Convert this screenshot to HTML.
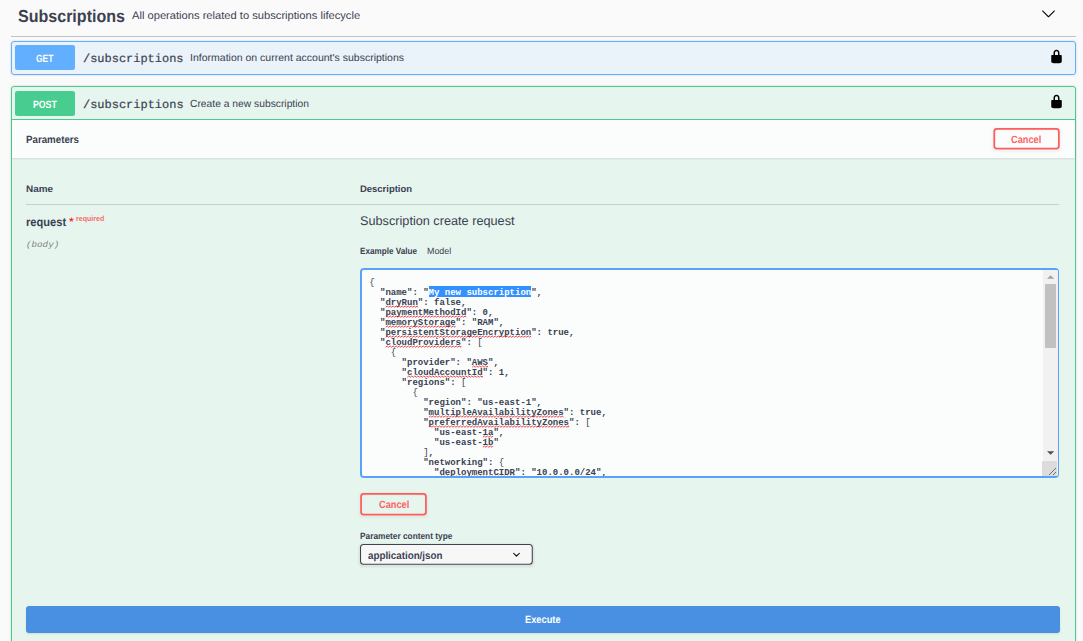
<!DOCTYPE html>
<html>
<head>
<meta charset="utf-8">
<title>Swagger UI</title>
<style>
*{box-sizing:border-box;}
html,body{margin:0;padding:0;}
body{width:1083px;height:641px;overflow:hidden;background:#fafafa;font-family:"Liberation Sans",sans-serif;color:#3b4151;position:relative;}
.abs{position:absolute;}
.t{position:absolute;white-space:nowrap;transform-origin:0 50%;line-height:1;}
.sans{font-family:"Liberation Sans",sans-serif;}
.mono{font-family:"Liberation Mono",monospace;}
.b{font-weight:700;}
.i{font-style:italic;}
#taghr{left:11px;top:36px;width:1065px;height:1px;background:rgba(59,65,81,.3);}
.opblock{position:absolute;left:11px;width:1065px;border:1px solid #000;border-radius:3px;box-shadow:0 0 2.25px rgba(0,0,0,.19);}
#get{top:41px;height:33.75px;border-color:#61affe;background:rgba(97,175,254,.1);}
#post{top:86.25px;height:700px;border-color:#49cc90;background:rgba(73,204,144,.1);}
.method{position:absolute;left:15.2px;width:59.8px;height:24.5px;border-radius:2.25px;}
#getm{top:45.2px;background:#61affe;}
#postm{top:91px;background:#49cc90;}
#postsumline{left:12px;top:119.25px;width:1063px;height:1px;background:#49cc90;}
#sechead{left:12px;top:120.25px;width:1063px;height:37.5px;background:rgba(255,255,255,.8);box-shadow:0 1px 2px rgba(0,0,0,.1);}
#thr{left:26.2px;top:204px;width:1033px;height:1px;background:rgba(59,65,81,.2);}
#taring{left:360px;top:268px;width:699px;height:210px;border:solid #58a3f8;border-width:2px 1px 2px 2px;border-radius:4px;}
#ta{border-radius:2px;background:rgba(255,255,255,.8);overflow:hidden;}
#ta pre i{font-style:normal;font-weight:400;}
#ta pre{margin:0;position:absolute;font-family:"Liberation Mono",monospace;font-weight:700;font-size:9px;line-height:10px;color:#3b4151;}
#selbg{background:#3390ff;}
.selt{color:#fff;}
#sb{right:0;top:-1px;width:15px;height:207px;background:#f1f1f1;}
#sbthumb{left:2px;top:15px;width:11px;height:64px;background:#c1c1c1;}
#sbcorner{left:-1px;bottom:0;width:15px;height:15px;background:#dcdcdc;}
#exec{left:26px;top:606px;width:1034px;height:26.5px;border-radius:3px;background:#4990e2;box-shadow:0 1px 2px rgba(0,0,0,.1);}
</style>
</head>
<body>
<div class="t sans b" id="h_title" style="left:17.70px;top:8.45px;font-size:17.40px;color:#3b4151;transform:rotate(0.03deg) scaleX(0.9223);">Subscriptions</div>
<div class="t sans" id="h_desc" style="left:131.93px;top:10.10px;font-size:10.80px;color:#3b4151;transform:rotate(0.03deg) scaleX(1.0328);">All operations related to subscriptions lifecycle</div>
<svg class="abs" id="chev" style="left:1040.75px;top:5.6px;" width="15" height="15" viewBox="0 0 20 20"><path fill="#000" d="M17.418 6.109c.272-.268.709-.268.979 0s.271.701 0 .969l-7.908 7.83c-.27.268-.707.268-.979 0l-7.908-7.83c-.27-.268-.27-.701 0-.969.271-.268.709-.268.979 0L10 13.25l7.418-7.141z"/></svg>
<div class="abs" id="taghr"></div>

<div class="opblock" id="get"></div>
<div class="method" id="getm"></div>
<div class="t sans b" id="get_m" style="left:36.26px;top:52.85px;font-size:10.50px;color:#fff;transform:rotate(0.03deg) scaleX(0.8022);">GET</div>
<div class="t mono" id="get_path" style="left:82.62px;top:53.83px;font-size:11.80px;color:#3b4151;transform:rotate(0.03deg) scaleX(1.0143);-webkit-text-stroke:0.2px #3b4151;">/subscriptions</div>
<div class="t sans" id="get_desc" style="left:190.16px;top:53.11px;font-size:10.30px;color:#3b4151;transform:rotate(0.03deg) scaleX(1.0206);">Information on current account&#39;s subscriptions</div>
<svg class="abs" id="lock1" style="left:1048.9px;top:49.15px;" width="15" height="15" viewBox="0 0 20 20"><path fill="#000" d="M15.8 8H14V5.6C14 2.703 12.665 1 10 1 7.334 1 6 2.703 6 5.6V8H4c-.553 0-1 .646-1 1.199V17c0 .549.428 1.139.951 1.307l1.197.387C5.672 18.861 6.55 19 7.1 19h5.8c.549 0 1.428-.139 1.951-.307l1.196-.387c.524-.167.953-.757.953-1.306V9.199C17 8.646 16.352 8 15.8 8zM12 8H8V5.199C8 3.754 8.797 3 10 3c1.203 0 2 .754 2 2.199V8z"/></svg>

<div class="opblock" id="post"></div>
<div class="method" id="postm"></div>
<div class="t sans b" id="post_m" style="left:33.21px;top:98.96px;font-size:10.50px;color:#fff;transform:rotate(0.03deg) scaleX(0.8288);">POST</div>
<div class="t mono" id="post_path" style="left:82.57px;top:99.71px;font-size:11.80px;color:#3b4151;transform:rotate(0.03deg) scaleX(1.0147);-webkit-text-stroke:0.2px #3b4151;">/subscriptions</div>
<div class="t sans" id="post_desc" style="left:190.18px;top:99.03px;font-size:10.30px;color:#3b4151;transform:rotate(0.03deg) scaleX(0.9993);">Create a new subscription</div>
<svg class="abs" id="lock2" style="left:1048.5px;top:94.25px;" width="15" height="15" viewBox="0 0 20 20"><path fill="#000" d="M15.8 8H14V5.6C14 2.703 12.665 1 10 1 7.334 1 6 2.703 6 5.6V8H4c-.553 0-1 .646-1 1.199V17c0 .549.428 1.139.951 1.307l1.197.387C5.672 18.861 6.55 19 7.1 19h5.8c.549 0 1.428-.139 1.951-.307l1.196-.387c.524-.167.953-.757.953-1.306V9.199C17 8.646 16.352 8 15.8 8zM12 8H8V5.199C8 3.754 8.797 3 10 3c1.203 0 2 .754 2 2.199V8z"/></svg>
<div class="abs" id="postsumline"></div>
<div class="abs" id="sechead"></div>
<div class="t sans b" id="params" style="left:26.27px;top:133.60px;font-size:10.50px;color:#3b4151;transform:rotate(0.03deg) scaleX(0.9269);">Parameters</div>
<svg class="abs" id="cancel1" style="left:989px;top:124px;overflow:visible" width="76" height="33"><rect x="4.40" y="5.00" width="66.35" height="21.50" rx="2.6" fill="none" stroke="rgba(0,0,0,.06)" stroke-width="2" style="filter:blur(1px)"/><rect x="5.27" y="4.88" width="64.60" height="19.75" rx="2.6" fill="none" stroke="#ff5c5c" stroke-width="1.75"/></svg>
<div class="t sans b" id="cancel1_t" style="left:1011.41px;top:134.21px;font-size:10.50px;color:#ff6060;transform:rotate(0.03deg) scaleX(0.8769);">Cancel</div>

<div class="t sans b" id="th_name" style="left:26.21px;top:184.48px;font-size:9.50px;color:#3b4151;transform:rotate(0.03deg) scaleX(1.0478);">Name</div>
<div class="t sans b" id="th_desc" style="left:359.71px;top:183.79px;font-size:9.50px;color:#3b4151;transform:rotate(0.03deg) scaleX(0.9944);">Description</div>
<div class="abs" id="thr"></div>
<div class="t sans b" id="p_name" style="left:26.46px;top:216.25px;font-size:12.00px;color:#3b4151;transform:rotate(0.03deg) scaleX(0.9245);">request</div>
<div class="t sans" id="p_star" style="left:68.85px;top:216.09px;font-size:12.50px;color:#ff0000;transform:rotate(0.03deg) scaleX(1.0000);">*</div>
<div class="t sans b" id="p_req" style="left:76.49px;top:215.01px;font-size:7.50px;color:rgba(255,0,0,.6);transform:rotate(0.03deg) scaleX(0.9401);">required</div>
<div class="t mono i" id="p_in" style="left:25.96px;top:241.08px;font-size:8.60px;color:#808080;transform:rotate(0.03deg) scaleX(1.0732);">(body)</div>
<div class="t sans" id="d_text" style="left:359.66px;top:215.47px;font-size:12.60px;color:#3b4151;transform:rotate(0.03deg) scaleX(1.0079);">Subscription create request</div>
<div class="t sans b" id="tab1" style="left:360.37px;top:247.16px;font-size:9.00px;color:#3b4151;transform:rotate(0.03deg) scaleX(0.9026);">Example Value</div>
<div class="t sans" id="tab2" style="left:427.23px;top:246.94px;font-size:9.00px;color:#3b4151;transform:rotate(0.03deg) scaleX(0.9870);">Model</div>

<div class="abs" id="taring"></div>
<div class="abs" id="ta" style="left:362.0px;top:270.0px;width:696.0px;height:206.0px;">
<div class="abs" id="selbg" style="left:67.20px;top:16.20px;width:102.30px;height:10.5px;"></div>
<pre id="code" style="left:7.20px;top:7.50px;"><i>{</i>
  "name": "<span class="selt">My new subscription</span>",
  "dryRun": false,
  "paymentMethodId": 0,
  "memoryStorage": "RAM",
  "persistentStorageEncryption": true,
  "cloudProviders": <i>[</i>
    <i>{</i>
      "provider": "AWS",
      "cloudAccountId": 1,
      "regions": <i>[</i>
        <i>{</i>
          "region": "us-east-1",
          "multipleAvailabilityZones": true,
          "preferredAvailabilityZones": <i>[</i>
            "us-east-1a",
            "us-east-1b"
          <i>]</i>,
          "networking": <i>{</i>
            "deploymentCIDR": "10.0.0.0/24",</pre>
<svg class="abs" id="squig" style="left:0;top:0" width="696.0" height="206.0"><path d="M23.70 37.25 L25.20 35.95 L26.70 37.25 L28.20 35.95 L29.70 37.25 L31.20 35.95 L32.70 37.25 L34.20 35.95 L35.70 37.25 L37.20 35.95 L38.70 37.25 L40.20 35.95 L41.70 37.25 L43.20 35.95 L44.70 37.25 L46.20 35.95 L47.70 37.25 L49.20 35.95 L50.70 37.25 L52.20 35.95 L53.70 37.25 L55.20 35.95 L55.61 37.25M23.70 47.25 L25.20 45.95 L26.70 47.25 L28.20 45.95 L29.70 47.25 L31.20 45.95 L32.70 47.25 L34.20 45.95 L35.70 47.25 L37.20 45.95 L38.70 47.25 L40.20 45.95 L41.70 47.25 L43.20 45.95 L44.70 47.25 L46.20 45.95 L47.70 47.25 L49.20 45.95 L50.70 47.25 L52.20 45.95 L53.70 47.25 L55.20 45.95 L56.70 47.25 L58.20 45.95 L59.70 47.25 L61.20 45.95 L62.70 47.25 L64.20 45.95 L65.70 47.25 L67.20 45.95 L68.70 47.25 L70.20 45.95 L71.70 47.25 L73.20 45.95 L74.70 47.25 L76.20 45.95 L77.70 47.25 L79.20 45.95 L80.70 47.25 L82.20 45.95 L83.70 47.25 L85.20 45.95 L86.70 47.25 L88.20 45.95 L89.70 47.25 L91.20 45.95 L92.70 47.25 L94.20 45.95 L95.70 47.25 L97.20 45.95 L98.70 47.25 L100.20 45.95 L101.70 47.25 L103.20 45.95 L104.22 47.25M23.70 57.25 L25.20 55.95 L26.70 57.25 L28.20 55.95 L29.70 57.25 L31.20 55.95 L32.70 57.25 L34.20 55.95 L35.70 57.25 L37.20 55.95 L38.70 57.25 L40.20 55.95 L41.70 57.25 L43.20 55.95 L44.70 57.25 L46.20 55.95 L47.70 57.25 L49.20 55.95 L50.70 57.25 L52.20 55.95 L53.70 57.25 L55.20 55.95 L56.70 57.25 L58.20 55.95 L59.70 57.25 L61.20 55.95 L62.70 57.25 L64.20 55.95 L65.70 57.25 L67.20 55.95 L68.70 57.25 L70.20 55.95 L71.70 57.25 L73.20 55.95 L74.70 57.25 L76.20 55.95 L77.70 57.25 L79.20 55.95 L80.70 57.25 L82.20 55.95 L83.70 57.25 L85.20 55.95 L86.70 57.25 L88.20 55.95 L89.70 57.25 L91.20 55.95 L92.70 57.25 L93.41 55.95M23.70 67.25 L25.20 65.95 L26.70 67.25 L28.20 65.95 L29.70 67.25 L31.20 65.95 L32.70 67.25 L34.20 65.95 L35.70 67.25 L37.20 65.95 L38.70 67.25 L40.20 65.95 L41.70 67.25 L43.20 65.95 L44.70 67.25 L46.20 65.95 L47.70 67.25 L49.20 65.95 L50.70 67.25 L52.20 65.95 L53.70 67.25 L55.20 65.95 L56.70 67.25 L58.20 65.95 L59.70 67.25 L61.20 65.95 L62.70 67.25 L64.20 65.95 L65.70 67.25 L67.20 65.95 L68.70 67.25 L70.20 65.95 L71.70 67.25 L73.20 65.95 L74.70 67.25 L76.20 65.95 L77.70 67.25 L79.20 65.95 L80.70 67.25 L82.20 65.95 L83.70 67.25 L85.20 65.95 L86.70 67.25 L88.20 65.95 L89.70 67.25 L91.20 65.95 L92.70 67.25 L94.20 65.95 L95.70 67.25 L97.20 65.95 L98.70 67.25 L100.20 65.95 L101.70 67.25 L103.20 65.95 L104.70 67.25 L106.20 65.95 L107.70 67.25 L109.20 65.95 L110.70 67.25 L112.20 65.95 L113.70 67.25 L115.20 65.95 L116.70 67.25 L118.20 65.95 L119.70 67.25 L121.20 65.95 L122.70 67.25 L124.20 65.95 L125.70 67.25 L127.20 65.95 L128.70 67.25 L130.20 65.95 L131.70 67.25 L133.20 65.95 L134.70 67.25 L136.20 65.95 L137.70 67.25 L139.20 65.95 L140.70 67.25 L142.20 65.95 L143.70 67.25 L145.20 65.95 L146.70 67.25 L148.20 65.95 L149.70 67.25 L151.20 65.95 L152.70 67.25 L154.20 65.95 L155.70 67.25 L157.20 65.95 L158.70 67.25 L160.20 65.95 L161.70 67.25 L163.20 65.95 L164.70 67.25 L166.20 65.95 L167.70 67.25 L169.03 65.95M23.70 77.25 L25.20 75.95 L26.70 77.25 L28.20 75.95 L29.70 77.25 L31.20 75.95 L32.70 77.25 L34.20 75.95 L35.70 77.25 L37.20 75.95 L38.70 77.25 L40.20 75.95 L41.70 77.25 L43.20 75.95 L44.70 77.25 L46.20 75.95 L47.70 77.25 L49.20 75.95 L50.70 77.25 L52.20 75.95 L53.70 77.25 L55.20 75.95 L56.70 77.25 L58.20 75.95 L59.70 77.25 L61.20 75.95 L62.70 77.25 L64.20 75.95 L65.70 77.25 L67.20 75.95 L68.70 77.25 L70.20 75.95 L71.70 77.25 L73.20 75.95 L74.70 77.25 L76.20 75.95 L77.70 77.25 L79.20 75.95 L80.70 77.25 L82.20 75.95 L83.70 77.25 L85.20 75.95 L86.70 77.25 L88.20 75.95 L89.70 77.25 L91.20 75.95 L92.70 77.25 L94.20 75.95 L95.70 77.25 L97.20 75.95 L98.70 77.25 L98.82 75.95M110.12 97.25 L111.62 95.95 L113.12 97.25 L114.62 95.95 L116.12 97.25 L117.62 95.95 L119.12 97.25 L120.62 95.95 L122.12 97.25 L123.62 95.95 L125.12 97.25 L125.82 95.95M45.31 107.25 L46.81 105.95 L48.31 107.25 L49.81 105.95 L51.31 107.25 L52.81 105.95 L54.31 107.25 L55.81 105.95 L57.31 107.25 L58.81 105.95 L60.31 107.25 L61.81 105.95 L63.31 107.25 L64.81 105.95 L66.31 107.25 L67.81 105.95 L69.31 107.25 L70.81 105.95 L72.31 107.25 L73.81 105.95 L75.31 107.25 L76.81 105.95 L78.31 107.25 L79.81 105.95 L81.31 107.25 L82.81 105.95 L84.31 107.25 L85.81 105.95 L87.31 107.25 L88.81 105.95 L90.31 107.25 L91.81 105.95 L93.31 107.25 L94.81 105.95 L96.31 107.25 L97.81 105.95 L99.31 107.25 L100.81 105.95 L102.31 107.25 L103.81 105.95 L105.31 107.25 L106.81 105.95 L108.31 107.25 L109.81 105.95 L111.31 107.25 L112.81 105.95 L114.31 107.25 L115.81 105.95 L117.31 107.25 L118.81 105.95 L120.31 107.25 L120.42 105.95M66.91 147.25 L68.41 145.95 L69.91 147.25 L71.41 145.95 L72.91 147.25 L74.41 145.95 L75.91 147.25 L77.41 145.95 L78.91 147.25 L80.41 145.95 L81.91 147.25 L83.41 145.95 L84.91 147.25 L86.41 145.95 L87.91 147.25 L89.41 145.95 L90.91 147.25 L92.41 145.95 L93.91 147.25 L95.41 145.95 L96.91 147.25 L98.41 145.95 L99.91 147.25 L101.41 145.95 L102.91 147.25 L104.41 145.95 L105.91 147.25 L107.41 145.95 L108.91 147.25 L110.41 145.95 L111.91 147.25 L113.41 145.95 L114.91 147.25 L116.41 145.95 L117.91 147.25 L119.41 145.95 L120.91 147.25 L122.41 145.95 L123.91 147.25 L125.41 145.95 L126.91 147.25 L128.41 145.95 L129.91 147.25 L131.41 145.95 L132.91 147.25 L134.41 145.95 L135.91 147.25 L137.41 145.95 L138.91 147.25 L140.41 145.95 L141.91 147.25 L143.41 145.95 L144.91 147.25 L146.41 145.95 L147.91 147.25 L149.41 145.95 L150.91 147.25 L152.41 145.95 L153.91 147.25 L155.41 145.95 L156.91 147.25 L158.41 145.95 L159.91 147.25 L161.41 145.95 L162.91 147.25 L164.41 145.95 L165.91 147.25 L167.41 145.95 L168.91 147.25 L170.41 145.95 L171.91 147.25 L173.41 145.95 L174.91 147.25 L176.41 145.95 L177.91 147.25 L179.41 145.95 L180.91 147.25 L182.41 145.95 L183.91 147.25 L185.41 145.95 L186.91 147.25 L188.41 145.95 L189.91 147.25 L191.41 145.95 L192.91 147.25 L194.41 145.95 L195.91 147.25 L197.41 145.95 L198.91 147.25 L200.41 145.95 L201.43 147.25M66.91 157.25 L68.41 155.95 L69.91 157.25 L71.41 155.95 L72.91 157.25 L74.41 155.95 L75.91 157.25 L77.41 155.95 L78.91 157.25 L80.41 155.95 L81.91 157.25 L83.41 155.95 L84.91 157.25 L86.41 155.95 L87.91 157.25 L89.41 155.95 L90.91 157.25 L92.41 155.95 L93.91 157.25 L95.41 155.95 L96.91 157.25 L98.41 155.95 L99.91 157.25 L101.41 155.95 L102.91 157.25 L104.41 155.95 L105.91 157.25 L107.41 155.95 L108.91 157.25 L110.41 155.95 L111.91 157.25 L113.41 155.95 L114.91 157.25 L116.41 155.95 L117.91 157.25 L119.41 155.95 L120.91 157.25 L122.41 155.95 L123.91 157.25 L125.41 155.95 L126.91 157.25 L128.41 155.95 L129.91 157.25 L131.41 155.95 L132.91 157.25 L134.41 155.95 L135.91 157.25 L137.41 155.95 L138.91 157.25 L140.41 155.95 L141.91 157.25 L143.41 155.95 L144.91 157.25 L146.41 155.95 L147.91 157.25 L149.41 155.95 L150.91 157.25 L152.41 155.95 L153.91 157.25 L155.41 155.95 L156.91 157.25 L158.41 155.95 L159.91 157.25 L161.41 155.95 L162.91 157.25 L164.41 155.95 L165.91 157.25 L167.41 155.95 L168.91 157.25 L170.41 155.95 L171.91 157.25 L173.41 155.95 L174.91 157.25 L176.41 155.95 L177.91 157.25 L179.41 155.95 L180.91 157.25 L182.41 155.95 L183.91 157.25 L185.41 155.95 L186.91 157.25 L188.41 155.95 L189.91 157.25 L191.41 155.95 L192.91 157.25 L194.41 155.95 L195.91 157.25 L197.41 155.95 L198.91 157.25 L200.41 155.95 L201.91 157.25 L203.41 155.95 L204.91 157.25 L206.41 155.95 L206.83 157.25M120.92 167.25 L122.42 165.95 L123.92 167.25 L125.42 165.95 L126.92 167.25 L128.42 165.95 L129.92 167.25 L131.22 165.95M120.92 177.25 L122.42 175.95 L123.92 177.25 L125.42 175.95 L126.92 177.25 L128.42 175.95 L129.92 177.25 L131.22 175.95M77.71 207.25 L79.21 205.95 L80.71 207.25 L82.21 205.95 L83.71 207.25 L85.21 205.95 L86.71 207.25 L88.21 205.95 L89.71 207.25 L91.21 205.95 L92.71 207.25 L94.21 205.95 L95.71 207.25 L97.21 205.95 L98.71 207.25 L100.21 205.95 L101.71 207.25 L103.21 205.95 L104.71 207.25 L106.21 205.95 L107.71 207.25 L109.21 205.95 L110.71 207.25 L112.21 205.95 L113.71 207.25 L115.21 205.95 L116.71 207.25 L118.21 205.95 L119.71 207.25 L121.21 205.95 L122.71 207.25 L124.21 205.95 L125.71 207.25 L127.21 205.95 L128.71 207.25 L130.21 205.95 L131.71 207.25 L133.21 205.95 L134.71 207.25 L136.21 205.95 L137.71 207.25 L139.21 205.95 L140.71 207.25 L142.21 205.95 L143.71 207.25 L145.21 205.95 L146.71 207.25 L148.21 205.95 L149.71 207.25 L151.21 205.95 L152.71 207.25 L152.82 205.95" fill="none" stroke="#e8262e" stroke-width="0.85" stroke-linejoin="round"/></svg>
  <div class="abs" id="sb">
    <div class="abs" id="sbthumb"></div>
    <svg class="abs" style="left:3.8px;top:6px;" width="7.2" height="4" viewBox="0 0 8 4"><path d="M0 4L4 0L8 4z" fill="#a3a3a3"/></svg>
    <svg class="abs" style="left:3.8px;top:182px;" width="7.2" height="4" viewBox="0 0 8 4"><path d="M0 0L4 4L8 0z" fill="#505050"/></svg>
    <div class="abs" id="sbcorner"><svg class="abs" style="left:0;top:0" width="15" height="15" viewBox="0 0 15 15"><path d="M7 14L14 7M11 14L14 11" stroke="#555" stroke-width="0.8" fill="none"/></svg></div>
  </div>
</div>

<svg class="abs" id="cancel2" style="left:356px;top:489px;overflow:visible" width="76" height="34"><rect x="4.20" y="5.00" width="66.60" height="22.40" rx="2.6" fill="none" stroke="rgba(0,0,0,.06)" stroke-width="2" style="filter:blur(1px)"/><rect x="5.07" y="4.88" width="64.85" height="20.65" rx="2.6" fill="none" stroke="#ff5c5c" stroke-width="1.75"/></svg>
<div class="t sans b" id="cancel2_t" style="left:378.55px;top:498.50px;font-size:10.50px;color:#ff6060;transform:rotate(0.03deg) scaleX(0.8773);">Cancel</div>
<div class="t sans b" id="pct" style="left:360.16px;top:532.29px;font-size:9.00px;color:#3b4151;transform:rotate(0.03deg) scaleX(0.9229);">Parameter content type</div>
<svg class="abs" id="select" style="left:356px;top:540px;overflow:visible" width="182" height="32"><rect x="4.00" y="5.00" width="172.80" height="20.80" rx="3" fill="none" stroke="rgba(0,0,0,.10)" stroke-width="2" style="filter:blur(1px)"/><rect x="4.53" y="4.53" width="171.75" height="19.75" rx="3" fill="#f7f7f7" stroke="#41444e" stroke-width="1.05"/></svg>
<div class="t sans b" id="sel_t" style="left:368.09px;top:550.34px;font-size:10.50px;color:#3b4151;transform:rotate(0.03deg) scaleX(0.9315);">application/json</div>
<svg class="abs" id="selchev" style="left:508.8px;top:546.8px;" width="15" height="15" viewBox="0 0 20 20"><path fill="#000" d="M13.418 7.859a.695.695 0 0 1 .978 0 .68.68 0 0 1 0 .969l-3.908 3.83a.697.697 0 0 1-.979 0l-3.908-3.83a.68.68 0 0 1 0-.969.695.695 0 0 1 .978 0L10 11l3.418-3.141z"/></svg>
<div class="abs" id="exec"></div>
<div class="t sans b" id="exec_t" style="left:525.17px;top:614.00px;font-size:10.50px;color:#fff;transform:rotate(0.03deg) scaleX(0.8843);">Execute</div>
</body>
</html>
